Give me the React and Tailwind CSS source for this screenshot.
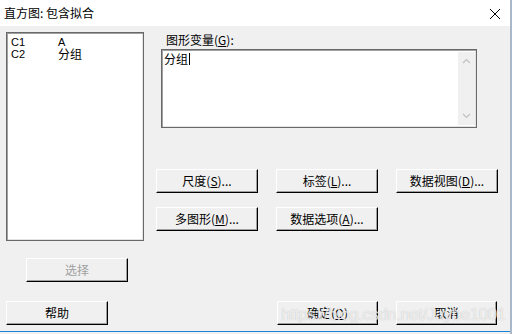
import React from "react";

const cjk = 'font-["Noto_Sans_CJK_SC","Noto_Sans",sans-serif]';

function Btn({ children, className = "", disabled = false }) {
  return (
    <div
      className={`h-[24px] flex items-center justify-center bg-[#f0f0f0] border-t border-l border-white border-r border-b border-r-black border-b-black shadow-[inset_-1px_-1px_0_#a0a0a0] text-[12px] leading-none ${cjk} ${
        disabled ? "text-[#a0a0a0]" : "text-black"
      } ${className}`}
    >
      {children}
    </div>
  );
}

function U({ children }) {
  return <span className="underline underline-offset-1">{children}</span>;
}

export default function App() {
  return (
    <div className="relative w-[512px] h-[334px] overflow-hidden bg-[#f0f0f0] flex flex-col">
      {/* title bar */}
      <div className="h-[26px] bg-white flex items-center pl-[4px] pr-[11px] shrink-0">
        <span className={`text-[12px] text-black ${cjk}`}>直方图: 包含拟合</span>
        <div className="flex-1" />
        <svg width="12" height="12" viewBox="0 0 12 12" className="mt-[1px]">
          <path d="M1 1L11 11M11 1L1 11" stroke="#000" strokeWidth="1" />
        </svg>
      </div>

      {/* body */}
      <div className="flex-1 flex flex-col pl-[6px] pt-[6px]">
        <div className="flex">
          {/* left column */}
          <div className="w-[138px] flex flex-col">
            <div className="h-[209px] bg-white border border-[#696969] shadow-[inset_1px_1px_0_#a0a0a0,inset_-1px_-1px_0_#e3e3e3] pl-[4px] pt-[3px]">
              <div className="flex h-[12px] items-center">
                <span className='w-[47px] text-[11px] font-["Liberation_Sans",sans-serif]'>C1</span>
                <span className='text-[11px] font-["Liberation_Sans",sans-serif]'>A</span>
              </div>
              <div className="flex h-[12px] items-center">
                <span className='w-[47px] text-[11px] font-["Liberation_Sans",sans-serif]'>C2</span>
                <span className={`text-[12px] ${cjk}`}>分组</span>
              </div>
            </div>
            <Btn disabled className="mt-[17px] ml-[20px] w-[102px]">
              选择
            </Btn>
          </div>

          {/* right column */}
          <div className="ml-[12px] flex flex-col">
            <div className={`h-[17px] pl-[10px] text-[12px] leading-[14px] pt-[1px] ${cjk}`}>
              图形变量(<U>G</U>):
            </div>
            <div className="ml-[5px] w-[316px] h-[79px] bg-white border border-[#696969] shadow-[inset_1px_1px_0_#a0a0a0,inset_-1px_-1px_0_#e3e3e3] flex p-[2px] pr-[1px]">
              <div className="flex-1 flex items-start">
                <span className={`text-[12px] leading-[14px] ${cjk}`}>分组</span>
                <span className="w-px h-[12px] bg-black ml-[1px] mt-[1px]" />
              </div>
              <div className="w-[17px] bg-[#f0f0f0] flex flex-col items-center justify-between py-[6px]">
                <svg width="9" height="6" viewBox="0 0 9 6">
                  <path d="M1 5L4.5 1.5L8 5" stroke="#c0c0c0" strokeWidth="1.2" fill="none" />
                </svg>
                <svg width="9" height="6" viewBox="0 0 9 6">
                  <path d="M1 1L4.5 4.5L8 1" stroke="#c0c0c0" strokeWidth="1.2" fill="none" />
                </svg>
              </div>
            </div>

            <div className="flex gap-[18px] mt-[41px]">
              <Btn className="w-[102px]">
                尺度(<U>S</U>)...
              </Btn>
              <Btn className="w-[102px]">
                标签(<U>L</U>)...
              </Btn>
              <Btn className="w-[102px]">
                数据视图(<U>D</U>)...
              </Btn>
            </div>
            <div className="flex gap-[18px] mt-[14px]">
              <Btn className="w-[102px]">
                多图形(<U>M</U>)...
              </Btn>
              <Btn className="w-[102px]">
                数据选项(<U>A</U>)...
              </Btn>
            </div>
          </div>
        </div>

        {/* bottom row */}
        <div className="flex mt-[19px]">
          <Btn className="w-[102px]">帮助</Btn>
          <Btn className="w-[101px] ml-[169px]">
            确定(<U>O</U>)
          </Btn>
          <Btn className="w-[101px] ml-[18px]">取消</Btn>
        </div>
      </div>

      {/* bottom border */}
      <div className="h-[1px] bg-[#1883d7] shrink-0 mb-[2px]" />
      {/* right border */}
      <div className="absolute right-0 top-0 bottom-0 w-[2px] bg-[#a8b8c8]" />

      {/* watermark */}
      <div className='absolute left-[281px] top-[302px] text-[17px] tracking-[-0.5px] font-["Liberation_Sans",sans-serif] text-white/70 [text-shadow:0_0_1px_rgba(150,150,150,0.6)] pointer-events-none whitespace-nowrap'>
        https://blog.csdn.net/Jaybe1001
      </div>
    </div>
  );
}
